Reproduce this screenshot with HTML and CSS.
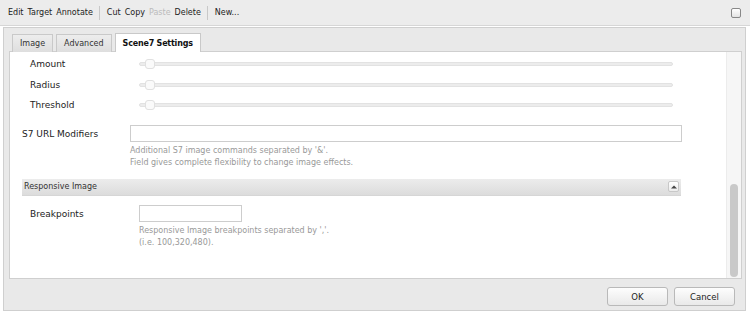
FILE: index.html
```html
<!DOCTYPE html>
<html>
<head>
<meta charset="utf-8">
<link rel="stylesheet" href="styles.css">
</head>
<body>
<div class="toolbar">
  <span class="tb">Edit</span><span class="tb">Target</span><span class="tb">Annotate</span>
  <span class="sep"></span>
  <span class="tb">Cut</span><span class="tb">Copy</span><span class="tb dis">Paste</span><span class="tb">Delete</span>
  <span class="sep"></span>
  <span class="tb">New...</span>
  <span class="grow"></span>
  <span class="chk"></span>
</div>
<div class="window">
  <div class="tabs">
    <div class="tab">Image</div>
    <div class="tab">Advanced</div>
    <div class="tab active">Scene7 Settings</div>
  </div>
  <div class="content">
    <div class="scroll">
      <div class="srow"><div class="slabel">Amount</div><div class="slider"><div class="track"></div><div class="thumb"></div></div></div>
      <div class="srow"><div class="slabel">Radius</div><div class="slider"><div class="track"></div><div class="thumb"></div></div></div>
      <div class="srow"><div class="slabel">Threshold</div><div class="slider"><div class="track"></div><div class="thumb"></div></div></div>
      <div class="frow url">
        <div class="flabel">S7 URL Modifiers</div>
        <div class="fcol">
          <div class="input wide"></div>
          <div class="help">Additional S7 image commands separated by '&amp;'.<br>Field gives complete flexibility to change image effects.</div>
        </div>
      </div>
      <div class="section">
        <span>Responsive Image</span>
        <span class="collapse"><svg width="6" height="4" viewBox="0 0 6 4"><path d="M0 3.5 L3 0.5 L6 3.5 Z" fill="#444"/></svg></span>
      </div>
      <div class="frow bp">
        <div class="flabel">Breakpoints</div>
        <div class="fcol">
          <div class="input small"></div>
          <div class="help">Responsive Image breakpoints separated by ','.<br>(i.e. 100,320,480).</div>
        </div>
      </div>
    </div>
    <div class="sbar"><div class="sthumb"></div></div>
  </div>
  <div class="footer">
    <button class="btn">OK</button>
    <button class="btn">Cancel</button>
  </div>
</div>
</body>
</html>
```
FILE: styles.css
```css
html, body { margin: 0; padding: 0; }
body {
  width: 750px; height: 314px; overflow: hidden;
  background: #fff;
  font-family: "DejaVu Sans", Verdana, sans-serif;
  font-size: 9px;
  color: #222;
}
.toolbar {
  height: 26px;
  box-sizing: border-box;
  background: #ececec;
  border-bottom: 1px solid #d6d6d6;
  display: flex; align-items: center;
  padding: 0 9px 0 6px;
  font-size: 8px;
}
.tb { padding: 0 2px; color: #222; }
.tb.dis { color: #bbb; }
.sep { width: 1px; height: 14px; background: #c8c8c8; margin: 0 5px 0 4px; }
.grow { flex: 1; }
.chk {
  width: 8px; height: 8px; border: 1px solid #888; border-radius: 2px;
  background: linear-gradient(#fff, #e4e4e4);
}
.window {
  margin: 1px 4px 0 3px;
  height: 284px;
  box-sizing: border-box;
  border: 1px solid #cfcfcf;
  background: #e9e9e9;
  display: flex; flex-direction: column;
}
.tabs {
  display: flex; align-items: flex-end; gap: 3px;
  height: 24px; box-sizing: border-box;
  border-bottom: 1px solid #cfcfcf;
  margin: 0 3px 0 5px;
  padding: 5px 0 0 3px;
  font-size: 8px;
}
.tab {
  height: 18px; box-sizing: border-box;
  padding: 0 7px;
  display: flex; align-items: center;
  border: 1px solid #c9c9c9; border-bottom: none;
  background: linear-gradient(#ededed, #dedede);
  color: #333;
  margin-bottom: -1px;
}
.tab.active { background: #fff; font-weight: bold; color: #111; height: 19px; padding: 0 7px; letter-spacing: -0.2px; }
.content {
  margin: 0 3px 0 5px;
  height: 226px;
  background: #fff;
  border: 1px solid #cfcfcf; border-top: none;
  display: flex;
}
.scroll { flex: 1; padding-top: 2px; }
.srow { display: flex; align-items: center; height: 20.5px; }
.slabel { width: 110px; padding-left: 20px; box-sizing: border-box; color: #222; }
.slider { position: relative; width: 534px; height: 10px; margin-left: 19px; }
.track {
  position: absolute; left: 0; right: 0; top: 3px;
  background: #ececec; border: 1px solid #e2e2e2; border-radius: 2px; box-sizing: border-box; height: 4px;
}
.thumb {
  position: absolute; left: 6px; top: 0; width: 10px; height: 10px;
  border: 1px solid #e0e0e0; border-radius: 3px; background: #fafafa; box-sizing: border-box;
}
.frow { display: flex; }
.flabel { box-sizing: border-box; padding-top: 4px; color: #222; }
.url { margin-top: 9px; }
.url .flabel { width: 120px; padding-left: 12px; }
.input { height: 17px; box-sizing: border-box; border: 1px solid #cdcdcd; background: #fff; }
.input.wide { width: 552px; }
.input.small { width: 103px; }
.help { color: #999; font-size: 8px; line-height: 12px; margin-top: 3px; }
.section {
  margin: 10px 45px 0 12px;
  height: 17px; box-sizing: border-box;
  background: linear-gradient(#ececec, #dcdcdc);
  border-bottom: 1px solid #d6d6d6;
  display: flex; align-items: center; justify-content: space-between;
  padding: 0 2px 0 2px;
  font-size: 8px; color: #333;
}
.collapse {
  width: 11px; height: 11px; box-sizing: border-box;
  border: 1px solid #c8c8c8; border-radius: 2px; background: linear-gradient(#fff, #ececec);
  display: flex; align-items: center; justify-content: center;
}
.bp { margin-top: 9px; }
.bp .flabel { width: 129px; padding-left: 20px; }
.sbar { width: 14px; background: #f6f6f6; border-left: 1px solid #ececec; position: relative; }
.sthumb { position: absolute; left: 3px; right: 3px; bottom: 1px; height: 93px; background: #c9c9c9; border-radius: 4px; }
.footer {
  flex: 1; display: flex; align-items: center; justify-content: flex-end;
  gap: 6px; padding: 4px 10px 0 0;
}
.btn {
  width: 61px; height: 19px;
  font-family: "DejaVu Sans", Verdana, sans-serif; font-size: 8.5px; color: #222;
  border: 1px solid #b9b9b9; border-radius: 3px;
  background: linear-gradient(#fdfdfd, #e9e9e9);
  padding: 0;
}
```
